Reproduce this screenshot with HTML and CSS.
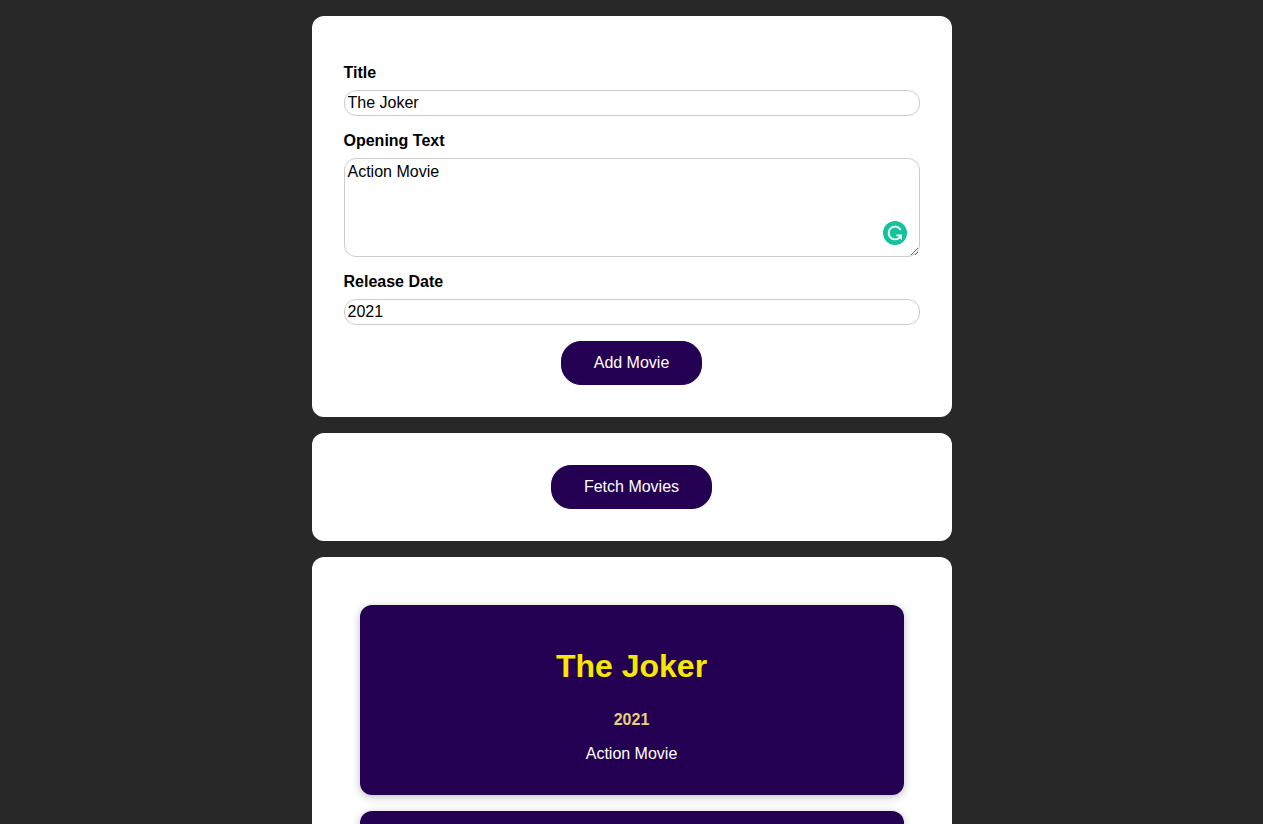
FILE: index.html
```html
<!DOCTYPE html>
<html lang="en">
<head>
<meta charset="utf-8">
<meta name="viewport" content="width=device-width, initial-scale=1">
<title>Movies</title>
<link rel="stylesheet" href="styles.css">
</head>
<body>
<main>
  <section class="panel">
    <form class="movie-form">
      <div class="control">
        <label for="title">Title</label>
        <input type="text" id="title" value="The Joker">
      </div>
      <div class="control">
        <label for="opening-text">Opening Text</label>
        <div class="text-wrap">
          <textarea rows="5" id="opening-text" spellcheck="false">Action Movie</textarea>
          <svg class="writing-badge" viewBox="0 0 24 24" aria-hidden="true">
            <circle cx="12" cy="12" r="12" fill="#15c39a"/>
            <path d="M17.2 8.2A6.4 6.4 0 1 0 15.8 17.2L17.4 14.8" fill="none" stroke="#fff" stroke-width="1.9" stroke-linecap="round"/>
            <path d="M13.4 13.6H19V19L17.2 17.4L16 15.2H13.4Z" fill="#fff"/>
          </svg>
        </div>
      </div>
      <div class="control">
        <label for="date">Release Date</label>
        <input type="text" id="date" value="2021">
      </div>
      <button class="button" type="button">Add Movie</button>
    </form>
  </section>
  <section class="panel">
    <button class="button" type="button">Fetch Movies</button>
  </section>
  <section class="panel">
    <ul class="movies-list">
      <li class="movie">
        <h2>The Joker</h2>
        <h3>2021</h3>
        <p>Action Movie</p>
      </li>
      <li class="movie"></li>
    </ul>
  </section>
</main>
</body>
</html>
```
FILE: styles.css
```css
* {
  box-sizing: border-box;
}

html {
  font-family: "Liberation Sans", Arial, sans-serif;
  background-color: #282828;
  scrollbar-width: none;
}

body {
  margin: 0;
}

.panel {
  width: 90%;
  max-width: 640px;
  margin: 16px auto;
  padding: 32px;
  border-radius: 12px;
  background-color: #fff;
  text-align: center;
}

.movie-form {
  padding-top: 16px;
}

.control {
  margin-bottom: 16px;
  text-align: left;
}

.control label {
  display: block;
  margin-bottom: 8px;
  font-weight: bold;
  line-height: 18px;
}

.control input,
.control textarea {
  display: block;
  width: 100%;
  margin: 0;
  padding: 3px;
  border: 1px solid #ccc;
  border-radius: 12px;
  color: #000;
  font: inherit;
  line-height: 18px;
}

.control input {
  height: 26px;
}

.control textarea {
  padding-top: 4px;
}

.text-wrap {
  position: relative;
}

.writing-badge {
  position: absolute;
  right: 13px;
  bottom: 12px;
  width: 24px;
  height: 24px;
}

.button {
  padding: 12px 32px;
  border: 1px solid #230052;
  border-radius: 20px;
  background-color: #230052;
  color: #fff;
  font: inherit;
  line-height: 18px;
  cursor: pointer;
}

.movies-list {
  margin: 0;
  padding: 0;
  list-style: none;
}

.movie {
  min-height: 190px;
  margin: 16px;
  padding: 16px;
  border-radius: 12px;
  background-color: #230052;
  box-shadow: 0 2px 8px rgba(0, 0, 0, 0.26);
  color: #fff;
}

.movie h2 {
  margin: 24px 0;
  color: #f7e702;
  font-size: 32px;
  line-height: 42px;
}

.movie h3 {
  margin: 16px 0;
  color: #e9cf7c;
  font-size: 16px;
  line-height: 18px;
}

.movie p {
  margin: 16px 0;
  line-height: 18px;
}
```
